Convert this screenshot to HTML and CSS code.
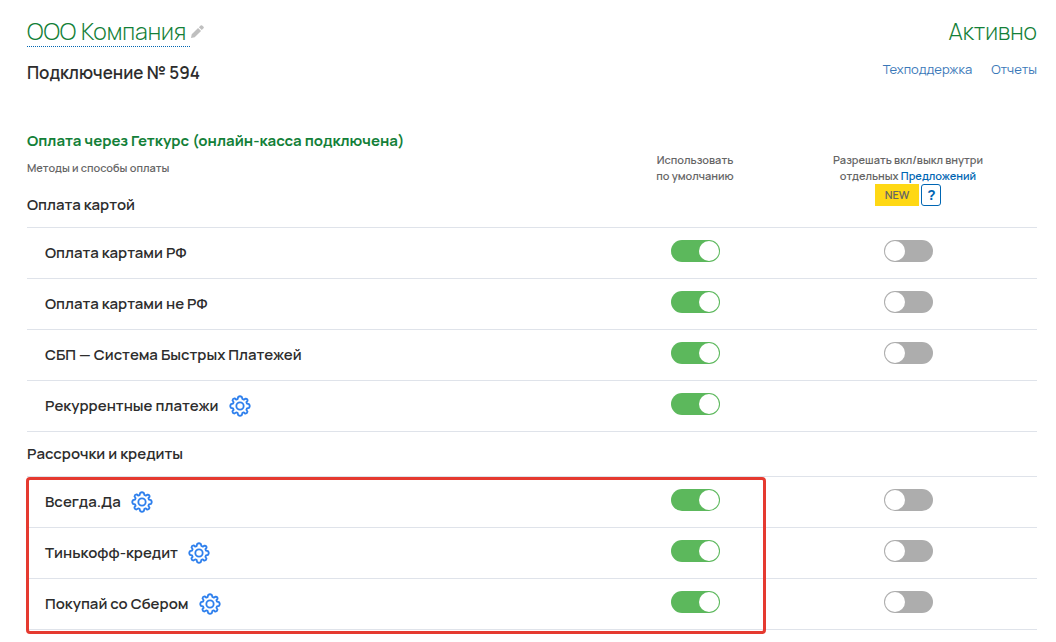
FILE: index.html
```html
<!DOCTYPE html>
<html lang="ru">
<head>
    <meta charset="UTF-8">
    <meta name="viewport" content="width=device-width, initial-scale=1.0">
    <title>Подключение № 594</title>

    <link rel="stylesheet" href="styles.css">
</head>
<body>
    <svg class="sprite" aria-hidden="true">
        <symbol id="gear" viewBox="0 0 24 24">
            <path d="M10 2.2Q12 .6 14 2.2L14.6 4.4L16.2 5.1L18.2 4Q20.6 4.2 20.2 6.5L19 7.8L19.6 9.4L21.8 10Q23.4 12 21.8 14L19.6 14.6L19 16.2L20.2 18.2Q19.8 20.5 17.5 20.2L16.2 19L14.6 19.6L14 21.8Q12 23.4 10 21.8L9.4 19.6L7.8 19L5.8 20.2Q3.5 19.8 3.8 17.5L5 16.2L4.4 14.6L2.2 14Q.6 12 2.2 10L4.4 9.4L5 7.8L3.8 5.8Q4.2 3.5 6.5 3.8L7.8 5L9.4 4.4Z"/>
            <circle cx="12" cy="12" r="4"/>
        </symbol>
    </svg>

    <header>
        <div>
            <h1>
                <span class="company">ООО Компания</span>
                <button class="icon-btn edit" aria-label="Изменить название">
                    <svg viewBox="0 0 14 14"><path d="M0 14L.8 10L7.6 3.2L10.8 6.4L4 13.2ZM8.5 2.4L10.4 .5Q11.2 -.2 12 .5L13.5 2Q14.2 2.8 13.5 3.6L11.6 5.5Z"/></svg>
                </button>
            </h1>
            <p class="number">Подключение № 594</p>
        </div>
        <div class="side">
            <p class="status">Активно</p>
            <nav>
                <a href="#">Техподдержка</a>
                <a href="#">Отчеты</a>
            </nav>
        </div>
    </header>

    <main>
        <table>
            <colgroup>
                <col>
                <col class="col-default">
                <col class="col-offer">
            </colgroup>
            <thead>
                <tr>
                    <th scope="col" class="intro">
                        <h2>Оплата через Геткурс (онлайн-касса подключена)</h2>
                        Методы и способы оплаты
                    </th>
                    <th scope="col" rowspan="2" class="head">Использовать<br>по умолчанию</th>
                    <th scope="col" rowspan="2" class="head">
                        Разрешать вкл/выкл внутри<br>отдельных <a href="#">Предложений</a>
                        <div class="marks">
                            <span class="new">NEW</span>
                            <button class="help">?</button>
                        </div>
                    </th>
                </tr>
                <tr>
                    <th class="group">Оплата картой</th>
                </tr>
            </thead>
            <tbody>
                <tr>
                    <th scope="row">Оплата картами РФ</th>
                    <td><input type="checkbox" class="switch" aria-label="Оплата картами РФ: по умолчанию" checked></td>
                    <td><input type="checkbox" class="switch" aria-label="Оплата картами РФ: в предложениях"></td>
                </tr>
                <tr>
                    <th scope="row">Оплата картами не РФ</th>
                    <td><input type="checkbox" class="switch" aria-label="Оплата картами не РФ: по умолчанию" checked></td>
                    <td><input type="checkbox" class="switch" aria-label="Оплата картами не РФ: в предложениях"></td>
                </tr>
                <tr>
                    <th scope="row">СБП — Система Быстрых Платежей</th>
                    <td><input type="checkbox" class="switch" aria-label="СБП: по умолчанию" checked></td>
                    <td><input type="checkbox" class="switch" aria-label="СБП: в предложениях"></td>
                </tr>
                <tr>
                    <th scope="row">
                        <div class="name">
                            Рекуррентные платежи
                            <button class="icon-btn gear" aria-label="Настроить рекуррентные платежи"><svg><use href="#gear"/></svg></button>
                        </div>
                    </th>
                    <td><input type="checkbox" class="switch" aria-label="Рекуррентные платежи: по умолчанию" checked></td>
                    <td></td>
                </tr>
                <tr>
                    <th scope="rowgroup" colspan="3" class="group">Рассрочки и кредиты</th>
                </tr>
            </tbody>
            <tbody class="marked">
                <tr>
                    <th scope="row">
                        <div class="name">
                            Всегда.Да
                            <button class="icon-btn gear" aria-label="Настроить Всегда.Да"><svg><use href="#gear"/></svg></button>
                        </div>
                    </th>
                    <td><input type="checkbox" class="switch" aria-label="Всегда.Да: по умолчанию" checked></td>
                    <td><input type="checkbox" class="switch" aria-label="Всегда.Да: в предложениях"></td>
                </tr>
                <tr>
                    <th scope="row">
                        <div class="name">
                            Тинькофф-кредит
                            <button class="icon-btn gear" aria-label="Настроить Тинькофф-кредит"><svg><use href="#gear"/></svg></button>
                        </div>
                    </th>
                    <td><input type="checkbox" class="switch" aria-label="Тинькофф-кредит: по умолчанию" checked></td>
                    <td><input type="checkbox" class="switch" aria-label="Тинькофф-кредит: в предложениях"></td>
                </tr>
                <tr>
                    <th scope="row">
                        <div class="name">
                            Покупай со Сбером
                            <button class="icon-btn gear" aria-label="Настроить Покупай со Сбером"><svg><use href="#gear"/></svg></button>
                        </div>
                    </th>
                    <td><input type="checkbox" class="switch" aria-label="Покупай со Сбером: по умолчанию" checked></td>
                    <td><input type="checkbox" class="switch" aria-label="Покупай со Сбером: в предложениях"></td>
                </tr>
            </tbody>
        </table>
    </main>
</body>
</html>
```

FILE: styles.css
```css
* {
    box-sizing: border-box;
}

body {
    font-family: Manrope, Inter, "Liberation Sans", sans-serif;
    font-size: 15px;
    line-height: 20px;
    color: #2d2d2d;
    background-color: #fff;
    margin: 0;
    padding: 16px 19px 0 27px;
}

h1, h2, p {
    margin: 0;
}

a {
    color: #0066b3;
    text-decoration: none;
}

a:hover {
    text-decoration: underline;
}

button {
    font-family: inherit;
    padding: 0;
    cursor: pointer;
}

.sprite {
    display: none;
}

header {
    display: flex;
    justify-content: space-between;
    margin-bottom: 48px;
}

h1, .status {
    font-size: 23px;
    font-weight: 300;
    line-height: 30px;
    color: #138038;
}

h1 {
    display: flex;
    align-items: center;
    gap: 1px;
}

.company {
    border-bottom: 1px dotted #0066b3;
    padding-right: 4px;
}

.number {
    font-size: 17px;
    font-weight: 600;
    margin-top: 16px;
}

.side {
    text-align: right;
}

nav {
    display: flex;
    justify-content: flex-end;
    gap: 19px;
    margin-top: 13px;
}

nav a {
    font-size: 13px;
    font-weight: 400;
    color: #3a78b8;
}

.icon-btn {
    display: flex;
    border: none;
    background: none;
}

.edit svg {
    width: 13px;
    height: 13px;
    fill: #bfbfbf;
}

.gear svg {
    width: 22px;
    height: 22px;
    fill: none;
    stroke: #2f80ed;
    stroke-width: 2;
    stroke-linejoin: round;
}

table {
    width: 100%;
    table-layout: fixed;
    border-collapse: separate;
    border-spacing: 0;
    padding-bottom: 8px;
}

.col-default {
    width: 168px;
}

.col-offer {
    width: 258px;
}

th, td {
    padding: 0;
    text-align: left;
    font-weight: 600;
}

thead .intro, thead .head {
    font-size: 11px;
    line-height: 16px;
    color: #666;
    vertical-align: top;
}

thead .intro {
    height: 52px;
}

thead .head {
    padding-top: 21px;
    border-bottom: 1px solid #dfe3ea;
    text-align: center;
}

h2 {
    font-size: 15px;
    font-weight: 700;
    line-height: 20px;
    color: #138038;
    margin-bottom: 9px;
}

.marks {
    display: flex;
    justify-content: center;
    gap: 2px;
}

.new {
    background-color: #ffd814;
    line-height: 22px;
    padding: 0 10px;
}

.help {
    width: 20px;
    height: 22px;
    border: 1px solid #0066b3;
    border-radius: 3px;
    background-color: #fff;
    color: #0066b3;
    font-size: 15px;
    line-height: 20px;
    font-weight: 700;
}

tbody th, tbody td {
    height: 51px;
    border-bottom: 1px solid #dfe3ea;
}

tbody th {
    padding-left: 18px;
}

tbody td {
    padding-bottom: 4px;
    text-align: center;
}

th.group {
    height: 45px;
    padding-left: 0;
    border-bottom: 1px solid #dfe3ea;
}

.name {
    display: flex;
    align-items: center;
    gap: 10px;
}

.switch {
    appearance: none;
    display: block;
    width: 49px;
    height: 22px;
    margin: 0 auto;
    padding: 1px;
    border-radius: 11px;
    background-color: #adadad;
    cursor: pointer;
    transition: background-color 0.3s ease;
}

.switch::before {
    content: "";
    display: block;
    width: 20px;
    height: 20px;
    border-radius: 50%;
    background-color: #fff;
}

.switch:checked {
    background-color: #5cb85c;
}

.switch:checked::before {
    margin-left: auto;
}

/* red frame over the first two columns */
.marked {
    position: relative;
}

.marked::after {
    content: "";
    position: absolute;
    top: 0;
    right: 271px;
    bottom: -4px;
    left: -1px;
    border: 3px solid #e53a30;
    border-radius: 4px;
    pointer-events: none;
}
```
